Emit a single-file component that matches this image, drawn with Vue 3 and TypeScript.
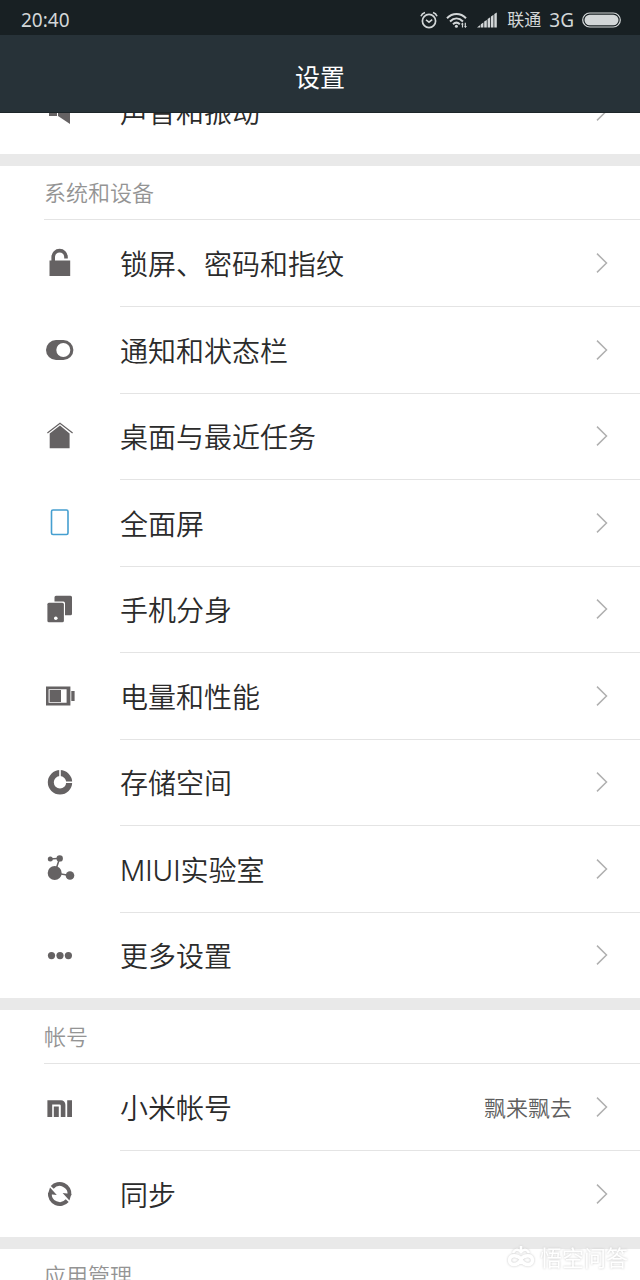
<script setup lang="ts">
type IconName =
  | 'sound' | 'lock' | 'toggle' | 'home' | 'screen' | 'clone' | 'battery'
  | 'storage' | 'lab' | 'more' | 'mi' | 'sync'

interface Item {
  icon: IconName
  label: string
  value?: string
}

interface Section {
  title?: string
  items: Item[]
}

const sections: Section[] = [
  { items: [{ icon: 'sound', label: '声音和振动' }] },
  {
    title: '系统和设备',
    items: [
      { icon: 'lock', label: '锁屏、密码和指纹' },
      { icon: 'toggle', label: '通知和状态栏' },
      { icon: 'home', label: '桌面与最近任务' },
      { icon: 'screen', label: '全面屏' },
      { icon: 'clone', label: '手机分身' },
      { icon: 'battery', label: '电量和性能' },
      { icon: 'storage', label: '存储空间' },
      { icon: 'lab', label: 'MIUI实验室' },
      { icon: 'more', label: '更多设置' },
    ],
  },
  {
    title: '帐号',
    items: [
      { icon: 'mi', label: '小米帐号', value: '飘来飘去' },
      { icon: 'sync', label: '同步' },
    ],
  },
  { title: '应用管理', items: [] },
]
</script>

<template>
  <div class="screen">
    <div class="status">
      <span class="clock">20:40</span>
      <svg class="alarm" width="18" height="18" viewBox="0 0 18 18" fill="none" stroke="currentColor">
        <circle cx="9" cy="10" r="6.6" stroke-width="1.7" />
        <path d="M6 8.8l3 2.4 3.2-2.6" stroke-width="1.5" />
        <path d="M1 5.2C1.6 3.4 3 2 5 1.4M17 5.2C16.4 3.4 15 2 13 1.4" stroke-width="1.6" />
      </svg>
      <svg class="wifi" width="22" height="18" viewBox="0 0 22 18" fill="none" stroke="currentColor" stroke-width="2">
        <path d="M1 7.2C6.5 1.6 14.5 1.6 20 7.2" />
        <path d="M4 10.4C8 6.6 13 6.6 17 10.4" />
        <path d="M7 13.2C9.2 11.2 11.6 11.2 13.8 13.2" />
        <circle cx="10.4" cy="15.3" r="1.5" fill="currentColor" stroke="none" />
        <path d="M16.5 16.5v-4.500M19.300 11.800v4.500" stroke-width="1.200" />
        <path d="M14.800 13.400l1.700-2 1 2zM18.300 15l1 2 1.700-2z" fill="currentColor" stroke="none" />
      </svg>
      <svg class="signal" width="20" height="16" viewBox="0 0 20 16" fill="currentColor">
        <path d="M0 15.500l3.200-2.500v2.500zM3.800 12.200l2.600-1.700v5H3.800zM7.200 9.600l2.600-1.600v7.500H7.200zM10.600 6.900l2.600-1.700v10.300h-2.600zM14 4.400l2.500-1.700v12.800H14zM17.300 2l2.500-1.600v15.100h-2.500z" />
      </svg>
      <span class="carrier">联通</span>
      <span class="network">3G</span>
      <svg class="cell" width="39" height="16" viewBox="0 0 39 16">
        <rect x="0.700" y="1" width="37.600" height="14" rx="7" fill="none" stroke="currentColor" stroke-width="1.200" />
        <rect x="2.500" y="2.800" width="34" height="10.400" rx="5.200" fill="currentColor" />
      </svg>
    </div>

    <header class="bar">
      <h1>设置</h1>
    </header>

    <main class="content">
      <section v-for="(section, s) in sections" :key="s" class="section">
        <h2 v-if="section.title">{{ section.title }}</h2>
        <ul v-if="section.items.length">
          <li v-for="item in section.items" :key="item.label">
            <button type="button" class="row">
              <svg class="icon" width="32" height="32" viewBox="0 0 32 32" fill="currentColor" aria-hidden="true">
                <path v-if="item.icon === 'sound'" d="M5 11h8v10H5zM14 10l12-7v26l-12-8z" />
                <template v-else-if="item.icon === 'lock'">
                  <path d="M5.500 13.500h20.700v15.500H5.500z" />
                  <path d="M9.200 14.500V10a6.400 6.400 0 0 1 12.800 0v1.500" fill="none" stroke="currentColor" stroke-width="3.600" />
                </template>
                <template v-else-if="item.icon === 'toggle'">
                  <rect x="2" y="6" width="27.400" height="20" rx="10" />
                  <circle cx="19.300" cy="16" r="7" fill="#fff" />
                </template>
                <template v-else-if="item.icon === 'home'">
                  <path d="M16 5.400l9.600 8V28.200H5.700V13.400z" />
                  <path d="M3.400 13L16 3.200 28.600 13" fill="none" stroke="currentColor" stroke-width="1.200" />
                </template>
                <rect v-else-if="item.icon === 'screen'" class="blue" x="7.500" y="3" width="16.500" height="24.500" rx="1.500" />
                <template v-else-if="item.icon === 'clone'">
                  <path d="M12 2.700h14.500a1.500 1.500 0 0 1 1.500 1.500v16.500a1.500 1.500 0 0 1-1.500 1.500H21V10.200a1.700 1.700 0 0 0-1.700-1.700h-8.800V4.200A1.500 1.500 0 0 1 12 2.700z" />
                  <rect x="3.400" y="9.700" width="16.500" height="19.600" rx="1.500" />
                  <circle cx="11.800" cy="25.200" r="1.800" fill="#fff" />
                </template>
                <template v-else-if="item.icon === 'battery'">
                  <path d="M2 6.500h24.400v19H2zM4.600 9.200v13.600h18V9.200z" fill-rule="evenodd" />
                  <path d="M5.600 10.100h11.400v11.800H5.600zM27.300 11h3.300v10h-3.300z" />
                </template>
                <template v-else-if="item.icon === 'storage'">
                  <circle cx="16" cy="16.300" r="9.200" fill="none" stroke="currentColor" stroke-width="6" />
                  <path d="M16 3v8M21 16.300h8" stroke="#fff" stroke-width="1.600" />
                </template>
                <template v-else-if="item.icon === 'lab'">
                  <path d="M6.300 6l9.400-.7-5 14.700L26 22.500" fill="none" stroke="currentColor" stroke-width="1.500" />
                  <circle cx="10.700" cy="20" r="7" />
                  <circle cx="26" cy="22.500" r="4.300" />
                  <circle cx="15.700" cy="5.400" r="3.200" />
                  <circle cx="6.300" cy="6" r="2.500" />
                </template>
                <template v-else-if="item.icon === 'more'">
                  <circle cx="7.500" cy="16.600" r="3.600" />
                  <circle cx="16" cy="16.600" r="3.600" />
                  <circle cx="24.400" cy="16.600" r="3.600" />
                </template>
                <path v-else-if="item.icon === 'mi'" d="M3.400 9.300h13.600a4.400 4.400 0 0 1 4.400 4.400V26h-4.600V14.800a1.400 1.400 0 0 0-1.400-1.400H8.200V26H3.400zM9.800 15.500h5V26h-5zM23.200 9.300H28V26h-4.800z" />
                <template v-else>
                  <path d="M8.200 9.400A9.900 9.900 0 0 1 25.500 17" fill="none" stroke="currentColor" stroke-width="3.900" />
                  <path d="M23.200 22.600A9.900 9.900 0 0 1 5.900 15" fill="none" stroke="currentColor" stroke-width="3.900" />
                  <path d="M18.600 15l8.800 1-2 6.400zM12.800 17l-8.800-1 2-6.400z" />
                </template>
              </svg>
              <span class="label">{{ item.label }}</span>
              <span v-if="item.value" class="value">{{ item.value }}</span>
              <svg class="chevron" width="12" height="20" viewBox="0 0 12 20" fill="none" aria-hidden="true">
                <path d="M1 0.600L10.500 10 1 19.400" stroke="#b0b0b0" stroke-width="1.500" />
              </svg>
            </button>
          </li>
        </ul>
      </section>
    </main>

    <div class="mark">
      <svg width="28" height="24" viewBox="0 0 28 24" fill="none" stroke="#fff" stroke-width="3.500">
        <path d="M14 14C11 10 3 9 2.500 15c0 6 8 6 11.500 0 3.500 6 11.500 6 11.500 0C25 9 17 10 14 14z" />
        <path d="M6 8c2-4 5-4 8-1 3-3 6-3 8 1M14 1v5" stroke-width="2.500" />
      </svg>
      <span>悟空问答</span>
    </div>
  </div>
</template>

<style>
body {
  margin: 0;
}
</style>

<style scoped>
.screen {
  position: relative;
  display: flex;
  flex-direction: column;
  height: 100vh;
  overflow: hidden;
  background: #fff;
  color: #2b2b2b;
  font-family: "Noto Sans", "Noto Sans CJK SC", sans-serif;
}

.status {
  display: flex;
  flex: none;
  align-items: center;
  box-sizing: border-box;
  height: 35px;
  padding: 4px 19px 0 21px;
  background: #182023;
  color: #d3d7d8;
  font-size: 19px;
  line-height: 24px;
}

.clock {
  margin-right: auto;
}

.wifi {
  margin-left: 8px;
}

.signal {
  margin-left: 9px;
}

.carrier {
  margin-left: 10px;
  font-size: 17px;
}

.network {
  margin-left: 8px;
}

.cell {
  margin-left: 8px;
}

.bar {
  display: flex;
  flex: none;
  align-items: center;
  justify-content: center;
  box-sizing: border-box;
  height: 78px;
  padding-top: 6px;
  border-bottom: 1px solid #1c2529;
  background: #273238;
}

h1 {
  margin: 0;
  color: #fff;
  font-size: 25px;
  font-weight: 400;
  line-height: 36px;
}

.content {
  flex: 1;
  min-height: 0;
  overflow: hidden;
}

.section + .section {
  border-top: 12px solid #e9e9e9;
}

/* The list is scrolled part way under the title bar. */
.section:first-child {
  margin-top: -45px;
}

h2 {
  box-sizing: border-box;
  height: 54px;
  margin: 0 0 0 44px;
  border-bottom: 1px solid #e4e4e4;
  color: #949494;
  font-size: 22px;
  font-weight: 350;
  line-height: 52px;
}

ul {
  margin: 0;
  padding: 0;
  list-style: none;
}

.row {
  position: relative;
  display: flex;
  align-items: center;
  width: 100%;
  height: 86px;
  padding: 0 32px 0 44px;
  border: 0;
  background: none;
  color: inherit;
  font-family: inherit;
  text-align: left;
}

li:nth-child(even) .row {
  height: 87px;
}

li + li .row::before {
  content: "";
  position: absolute;
  top: 0;
  right: 0;
  left: 120px;
  height: 1px;
  background: #e4e4e4;
}

.icon {
  flex: none;
  color: #656263;
}

.blue {
  fill: none;
  stroke: #459fd0;
  stroke-width: 1.6px;
}

.label {
  flex: 1;
  padding-top: 4px;
  margin-left: 44px;
  font-family: Inter, "Noto Sans CJK SC", sans-serif;
  font-size: 28px;
  font-weight: 350;
  line-height: 40px;
}

.value {
  margin-right: 24px;
  color: #5e5e5e;
  font-size: 22px;
  font-weight: 350;
  line-height: 32px;
}

.chevron {
  flex: none;
}

.mark {
  position: absolute;
  right: 12px;
  bottom: 7px;
  display: flex;
  align-items: center;
  gap: 5px;
  color: #fff;
  font-size: 22px;
  line-height: 32px;
  filter: drop-shadow(0 0 1px #c8c8c8);
}
</style>
